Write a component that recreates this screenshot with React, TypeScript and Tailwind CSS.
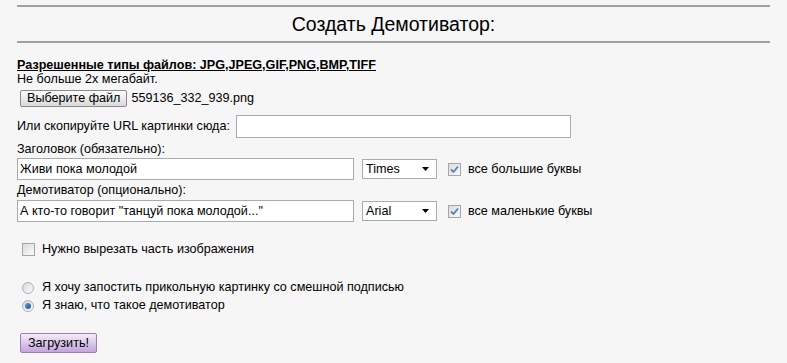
import React from "react";

// Чекбокс в стиле XP (серый)
function Check({ checked }: { checked?: boolean }) {
  return (
    <span className="inline-flex w-[13px] h-[13px] border border-[#a6a6a6] bg-gradient-to-br from-[#dcdcdc] to-[#fafafa] items-center justify-center shrink-0">
      {checked && (
        <svg width="9" height="9" viewBox="0 0 9 9">
          <path d="M1 4.5 L3.5 7 L8 1.5" fill="none" stroke="#5a7fc0" strokeWidth="1.8" />
        </svg>
      )}
    </span>
  );
}

// Радио-кнопка
function Radio({ checked }: { checked?: boolean }) {
  return (
    <span className="inline-flex w-[12px] h-[12px] rounded-full border border-[#b0b0b0] bg-gradient-to-br from-[#d8d8d8] to-[#fbfbfb] items-center justify-center shrink-0">
      {checked && <span className="w-[6px] h-[6px] rounded-full bg-gradient-to-br from-[#5aa0e8] to-[#1c4f9c]" />}
    </span>
  );
}

// Выпадающий список
function Select({ value }: { value: string }) {
  return (
    <div className="w-[75px] h-[20px] bg-white border border-[#a5acb2] flex items-center justify-between pl-[3px] pr-[7px]">
      <span>{value}</span>
      <svg width="7" height="4" viewBox="0 0 7 4">
        <path d="M0 0 H7 L3.5 4 Z" fill="#000" />
      </svg>
    </div>
  );
}

export default function App() {
  return (
    <div
      className="w-[787px] h-[363px] bg-[#f6f6f6] text-black text-[12.6px] leading-[15px] px-[17px] pt-[5px]"
      style={{ fontFamily: '"Liberation Sans", Arial, sans-serif' }}
    >
      <div className="border-t-2 border-[#a0a0a0] w-[753px]" />
      <div className="h-[34px] flex items-center justify-center text-[19.5px]">Создать Демотиватор:</div>
      <div className="border-t-2 border-[#a0a0a0] w-[753px]" />

      <div className="mt-[15px] font-bold underline text-[12.6px]">
        Разрешенные типы файлов: JPG,JPEG,GIF,PNG,BMP,TIFF
      </div>
      <div className="mt-[-1px]">Не больше 2х мегабайт.</div>

      {/* Выбор файла */}
      <div className="mt-[3px] flex items-center gap-[4px] pl-[3px]">
        <button className="h-[17px] px-[6px] rounded-[2px] border border-[#8a8a8a] bg-gradient-to-b from-[#fdfdfd] to-[#d9d9d9] text-[12.6px] leading-[13px]">
          Выберите файл
        </button>
        <span>559136_332_939.png</span>
      </div>

      {/* URL */}
      <div className="mt-[8px] flex items-center gap-[6px]">
        <span>Или скопируйте URL картинки сюда:</span>
        <div className="w-[335px] h-[23px] bg-white border border-[#a5acb2]" />
      </div>

      <div className="mt-[4px]">Заголовок (обязательно):</div>
      <div className="mt-[1px] flex items-center">
        <div className="w-[337px] h-[22px] bg-white border border-[#a5acb2] flex items-center px-[2px]">Живи пока молодой</div>
        <div className="ml-[8px]"><Select value="Times" /></div>
        <div className="ml-[11px] flex items-center gap-[7px]">
          <Check checked />
          <span>все большие буквы</span>
        </div>
      </div>

      <div className="mt-[3px]">Демотиватор (опционально):</div>
      <div className="mt-[2px] flex items-center">
        <div className="w-[337px] h-[22px] bg-white border border-[#a5acb2] flex items-center px-[2px]">
          А кто-то говорит "танцуй пока молодой..."
        </div>
        <div className="ml-[8px]"><Select value="Arial" /></div>
        <div className="ml-[11px] flex items-center gap-[7px]">
          <Check checked />
          <span>все маленькие буквы</span>
        </div>
      </div>

      <div className="mt-[20px] ml-[5px] flex items-center gap-[7px]">
        <Check />
        <span>Нужно вырезать часть изображения</span>
      </div>

      <div className="mt-[23px] ml-[5px] flex flex-col gap-[3px]">
        <div className="flex items-center gap-[8px]">
          <Radio />
          <span>Я хочу запостить прикольную картинку со смешной подписью</span>
        </div>
        <div className="flex items-center gap-[8px]">
          <Radio checked />
          <span>Я знаю, что такое демотиватор</span>
        </div>
      </div>

      <button className="mt-[20px] ml-[3px] h-[20px] w-[77px] rounded-[2px] border border-[#9a80b8] bg-gradient-to-b from-[#f4ecfa] to-[#c4a4dc] text-[12.6px] leading-[13px]">
        Загрузить!
      </button>
    </div>
  );
}
